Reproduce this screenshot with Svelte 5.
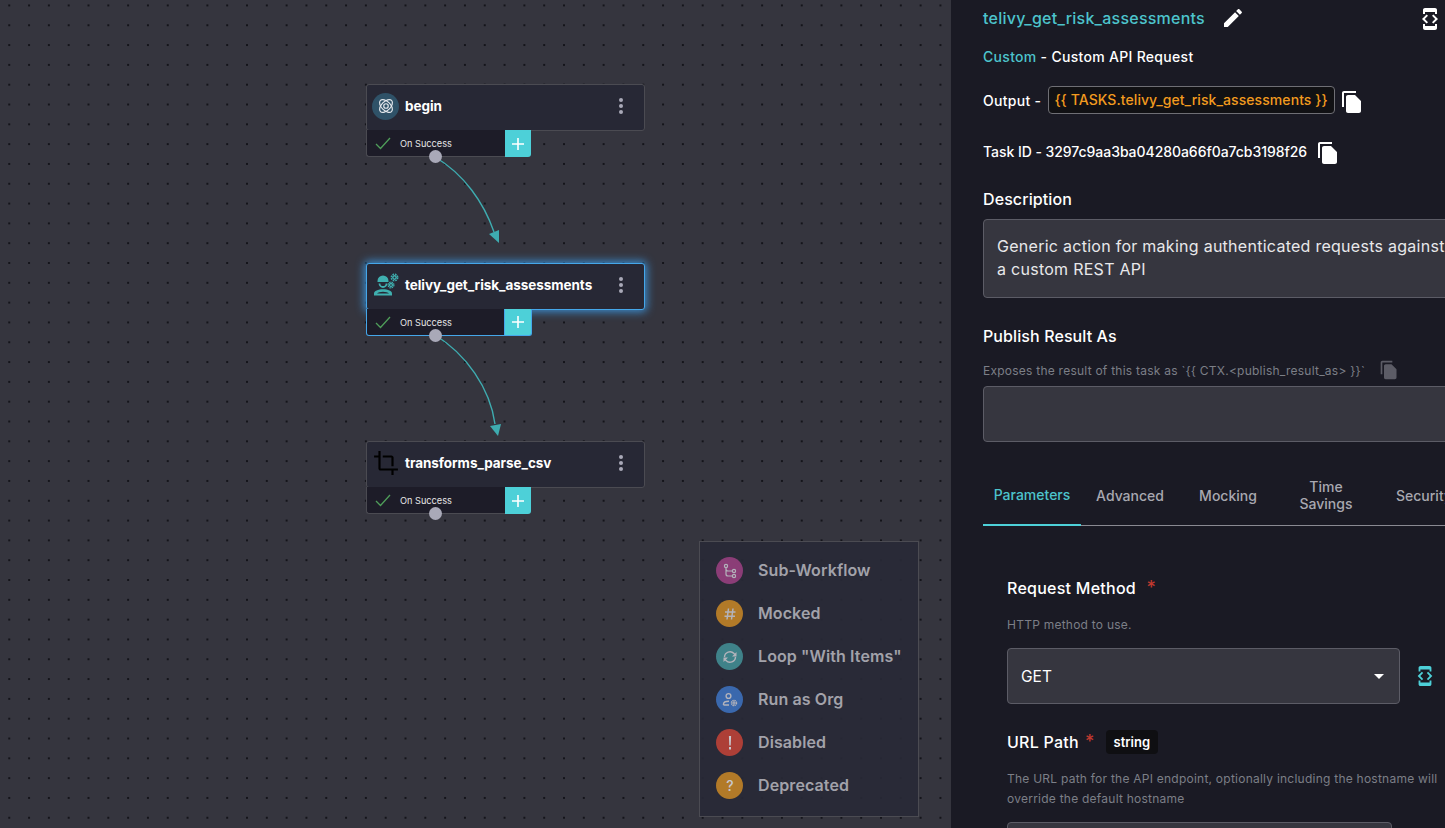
<script>
	const nodes = [
		{ name: 'begin', top: 84, icon: 'atom' },
		{ name: 'telivy_get_risk_assessments', top: 263, icon: 'worker', selected: true },
		{ name: 'transforms_parse_csv', top: 441, icon: 'crop' }
	]

	const legend = [
		{ label: 'Sub-Workflow', color: '#8b3d77', icon: 'branch' },
		{ label: 'Mocked', color: '#b27a28', icon: 'hash' },
		{ label: 'Loop "With Items"', color: '#3f8289', icon: 'loop' },
		{ label: 'Run as Org', color: '#3a68ad', icon: 'org' },
		{ label: 'Disabled', color: '#ad3f37', icon: 'bang' },
		{ label: 'Deprecated', color: '#b27a28', icon: 'question' }
	]

	const tabs = ['Parameters', 'Advanced', 'Mocking', 'Time Savings', 'Security']

	const copyPath = 'M16 1H4c-1.1 0-2 .9-2 2v14h2V3h12V1zm-1 4l6 6v10c0 1.1-.9 2-2 2H7.99C6.89 23 6 22.1 6 21l.01-14c0-1.1.89-2 1.99-2h7z'
	const codePath = 'M7 5h10v2h2V3c0-1.1-.9-1.99-2-1.99L7 1c-1.1 0-2 .9-2 2v4h2V5zm8.41 11.59L20 12l-4.59-4.59L14 8.83 17.17 12 14 15.17l1.41 1.42zM10 15.17L6.83 12 10 8.83 8.59 7.41 4 12l4.59 4.59L10 15.17zM17 19H7v-2H5v4c0 1.1.9 2 2 2h10c1.1 0 2-.9 2-2v-4h-2v2z'
</script>

<div class="app">
	<div class="canvas">
		<svg class="edges" width="951" height="828" aria-hidden="true">
			<path d="M435 157 C464 174 484 203 494 232" />
			<polygon points="499,243 489,234 499,230" />
			<path d="M435 335 C466 354 490 388 495 424" />
			<polygon points="498,436 490,426 501,424" />
		</svg>

		{#each nodes as node}
			<div class="node" class:selected={node.selected} style="top: {node.top}px">
				<div class="node-head">
					<span class="node-icon">
						{#if node.icon === 'atom'}
							<span class="atom-bg">
								<svg width="18" height="18" viewBox="0 0 24 24" fill="none" stroke="#e4e8ec" stroke-width="1.6">
									<ellipse cx="12" cy="12" rx="10.5" ry="6" transform="rotate(45 12 12)" />
									<ellipse cx="12" cy="12" rx="10.5" ry="6" transform="rotate(-45 12 12)" />
									<circle cx="12" cy="12" r="3" />
								</svg>
							</span>
						{:else if node.icon === 'worker'}
							<svg width="26" height="24" viewBox="0 0 26 24" fill="#3fb0b0">
								<path d="M4.500 8a5.500 5.500 0 0 1 11 0v1h-11z" />
								<path d="M6.500 10.500a3.500 3.500 0 0 0 7 0" fill="none" stroke="#3fb0b0" stroke-width="1.800" />
								<path d="M1 22.500v-2c0-2.500 4-4.200 9-4.200s9 1.700 9 4.200v2z" />
								<path d="M4 20.500c1-1 3.500-1.800 6-1.800s5 .8 6 1.800z" fill="#272835" />
								<circle cx="21.500" cy="4.500" r="1.700" fill="none" stroke="#3fb0b0" stroke-width="1.500" />
								<circle cx="21.500" cy="4.500" r="3.300" fill="none" stroke="#3fb0b0" stroke-width="1.300" stroke-dasharray="1.700 0.900" />
								<circle cx="18" cy="12" r="1.500" fill="none" stroke="#3fb0b0" stroke-width="1.300" />
								<circle cx="18" cy="12" r="2.900" fill="none" stroke="#3fb0b0" stroke-width="1.200" stroke-dasharray="1.500 0.800" />
							</svg>
						{:else}
							<svg width="26" height="26" viewBox="0 0 24 24" fill="#000">
								<path d="M17 15h2V7c0-1.100-.9-2-2-2H9v2h8v8zM7 17V1H5v4H1v2h4v10c0 1.100.9 2 2 2h10v4h2v-4h4v-2H7z" />
							</svg>
						{/if}
					</span>
					<span class="node-name">{node.name}</span>
					<span class="more"><i></i><i></i><i></i></span>
				</div>
				<div class="node-foot">
					<div class="branch">
						<svg width="16" height="13" viewBox="0 0 16 13" fill="none" stroke="#4f9e5a" stroke-width="1.300"><path d="M1 7l4.500 4.500L15 1" /></svg>
						<span>On Success</span>
					</div>
					<div class="plus">
						<svg width="12" height="12" viewBox="0 0 12 12" stroke="#fff" stroke-width="1.600"><path d="M6 0v12M0 6h12" /></svg>
					</div>
					<span class="handle"></span>
				</div>
			</div>
		{/each}

		<div class="legend">
			{#each legend as item}
				<div class="legend-row">
					<span class="legend-dot" style="background: {item.color}">
						<svg width="16" height="16" viewBox="0 0 16 16" fill="none" stroke="#b3b3bb" stroke-width="1.200">
							{#if item.icon === 'branch'}
								<circle cx="4" cy="3" r="1.600" /><circle cx="12" cy="8" r="1.600" /><circle cx="12" cy="13" r="1.600" />
								<path d="M4 4.600V11c0 1.300.8 2 2 2h4.400M4 6c0 1.300.8 2 2 2h4.400" />
							{:else if item.icon === 'hash'}
								<path stroke-width="1.500" d="M6.500 2.500L5 13.500M11 2.500L9.500 13.500M3 6h10.500M2.500 10.200h10.500" />
							{:else if item.icon === 'loop'}
								<path stroke-width="1.400" d="M2.500 8a5.500 5.500 0 0 1 9.500-3.500L13.500 6M13.500 8A5.500 5.500 0 0 1 4 11.500L2.500 10" />
								<path fill="#b3b3bb" stroke="none" d="M14.500 3v4.500H10zM1.500 13V8.500H6z" />
							{:else if item.icon === 'org'}
								<circle cx="6.500" cy="4" r="2.400" stroke-width="1.400" />
								<path stroke-width="1.400" d="M1.500 13v-1c0-1.800 2.500-2.700 5.500-2.700M1.500 13h5.500" />
								<circle cx="12" cy="11" r="1.100" stroke-width="1.100" />
								<circle cx="12" cy="11" r="2.600" stroke-width="1.300" stroke-dasharray="1.400 0.650" />
							{:else if item.icon === 'bang'}
								<path fill="#c8c8ce" stroke="none" d="M6.900 1h2.200l-.4 9.500H7.300zM7 12h2v2.500H7z" />
							{:else}
								<text x="8" y="13" text-anchor="middle" class="q">?</text>
							{/if}
						</svg>
					</span>
					<span class="legend-label">{item.label}</span>
				</div>
			{/each}
		</div>
	</div>

	<aside class="panel">
		<div class="panel-inner">
			<div class="title-row">
				<span class="title">telivy_get_risk_assessments</span>
				<svg class="pencil" width="24" height="24" viewBox="0 0 24 24" fill="#fff"><path d="M3 17.250V21h3.750L17.810 9.940l-3.750-3.750L3 17.250zM20.710 7.040c.39-.39.39-1.020 0-1.410l-2.340-2.340c-.39-.39-1.020-.39-1.410 0l-1.830 1.830 3.750 3.750 1.830-1.830z" /></svg>
				<svg class="code-top" width="24" height="24" viewBox="0 0 24 24" fill="#fff"><path d={codePath} /></svg>
			</div>

			<div class="sub-row"><span class="teal">Custom</span> - Custom API Request</div>

			<div class="output-row">
				<span class="output-label">Output -</span>
				<span class="chip">{'{{'} TASKS.telivy_get_risk_assessments {'}}'}</span>
				<svg class="copy" width="24" height="24" viewBox="0 0 24 24" fill="#fff"><path d={copyPath} /></svg>
			</div>

			<div class="task-row">
				<span>Task ID - 3297c9aa3ba04280a66f0a7cb3198f26</span>
				<svg class="copy" width="24" height="24" viewBox="0 0 24 24" fill="#fff"><path d={copyPath} /></svg>
			</div>

			<h3 class="heading">Description</h3>
			<div class="textbox desc">Generic action for making authenticated requests against<br />a custom REST API</div>

			<h3 class="heading publish">Publish Result As</h3>
			<div class="hint-row">
				<span class="hint">Exposes the result of this task as `{'{{'} CTX.&lt;publish_result_as&gt; {'}}'}`</span>
				<svg width="20" height="20" viewBox="0 0 24 24" fill="#5c5c66"><path d={copyPath} /></svg>
			</div>
			<div class="textbox result"></div>

			<div class="tabs">
				{#each tabs as tab, i}
					<div class="tab" class:active={i === 0}>{tab}</div>
				{/each}
			</div>

			<div class="params">
				<div class="label method-label">Request Method <span class="star">*</span></div>
				<div class="hint method-hint">HTTP method to use.</div>
				<div class="select-row">
					<div class="select">
						<span>GET</span>
						<span class="caret"></span>
					</div>
					<svg width="22" height="22" viewBox="0 0 24 24" fill="#4dd0d8"><path d={codePath} /></svg>
				</div>

				<div class="label url-label">
					URL Path <span class="star">*</span>
					<span class="type">string</span>
				</div>
				<div class="hint url-hint">The URL path for the API endpoint, optionally including the hostname will<br />override the default hostname</div>
				<div class="url-input"></div>
			</div>
		</div>
	</aside>
</div>

<style>
	:global(body) {
		margin: 0;
		overflow: hidden;
		background: #1a1a24;
	}

	.app {
		display: flex;
		width: 1445px;
		height: 828px;
		overflow: hidden;
		font-family: Inter, 'Noto Sans', sans-serif;
		color: #fff;
	}

	/* graph side */
	.canvas {
		position: relative;
		flex: 0 0 951px;
		background-color: #35353e;
		background-image: radial-gradient(circle at center, #14141a 0.7px, transparent 1px);
		background-size: 19.82px 19.82px;
		background-position: -0.67px -4.47px;
	}

	.edges {
		position: absolute;
		top: 0;
		left: 0;
	}

	.edges path {
		fill: none;
		stroke: #3eacb0;
		stroke-width: 1.400;
	}

	.edges polygon {
		fill: #3eacb0;
	}

	.node {
		position: absolute;
		left: 366px;
		width: 279px;
	}

	.node-head {
		display: flex;
		align-items: center;
		box-sizing: border-box;
		height: 47px;
		padding: 0 21px 3px 5px;
		background: #272835;
		border: 1px solid #4b4b52;
		border-radius: 3px;
	}

	.node-icon {
		display: flex;
		justify-content: center;
		flex: 0 0 27px;
		margin-right: 6px;
	}

	.atom-bg {
		display: flex;
		align-items: center;
		justify-content: center;
		width: 27px;
		height: 27px;
		border-radius: 50%;
		background: #2f5268;
	}

	.node-name {
		flex: 1;
		font-size: 13.500px;
		font-weight: 700;
		letter-spacing: -0.05px;
	}

	.more {
		display: flex;
		flex-direction: column;
		gap: 2.200px;
	}

	.more i {
		width: 4.200px;
		height: 4.200px;
		border-radius: 50%;
		background: #a9a9b8;
	}

	.node-foot {
		position: relative;
		display: flex;
		height: 27px;
		width: 165px;
		margin-top: -1px;
	}

	.branch {
		display: flex;
		align-items: center;
		box-sizing: border-box;
		width: 139px;
		padding-left: 8px;
		background: #1d1c28;
		border: 1px solid #4b4b52;
		border-top: none;
		border-right: none;
		border-radius: 0 0 0 3px;
		font-size: 9.200px;
		color: #e6e6e6;
	}

	.branch span {
		margin-left: 9px;
	}

	.plus {
		display: flex;
		align-items: center;
		justify-content: center;
		flex: 1;
		background: #4dd0d8;
		border-radius: 0 0 3px 0;
	}

	.handle {
		position: absolute;
		left: 63px;
		bottom: -6px;
		width: 13px;
		height: 13px;
		border-radius: 50%;
		background: #a9a9b8;
	}

	.selected .node-head {
		border-color: #45a7ea;
		box-shadow: 0 0 9px 2px rgba(60, 160, 240, 0.8);
	}

	.selected .branch {
		border-color: #45a7ea;
		border-right: 1px solid #45a7ea;
	}

	.selected .node-foot {
		width: 166px;
	}

	.selected .plus {
		border-bottom: 1px solid #45a7ea;
		border-right: 1px solid #45a7ea;
	}

	.q {
		fill: #c8c8ce;
		stroke: none;
		font-size: 14px;
		font-weight: 500;
		font-family: Inter, sans-serif;
	}

	.legend {
		position: absolute;
		left: 699px;
		top: 541px;
		box-sizing: border-box;
		width: 220px;
		height: 276px;
		padding: 15px 0 0 16px;
		background: rgba(40, 41, 54, 0.92);
		border: 1px solid #4b4b52;
	}

	.legend-row {
		display: flex;
		align-items: center;
		height: 27px;
		margin-bottom: 16px;
	}

	.legend-dot {
		display: flex;
		align-items: center;
		justify-content: center;
		width: 27px;
		height: 27px;
		margin-right: 15px;
		border-radius: 50%;
	}

	.legend-label {
		margin-top: -2px;
		font-size: 16px;
		font-weight: 600;
		letter-spacing: 0.1px;
		color: #a2a2aa;
		white-space: nowrap;
	}

	/* task panel */
	.panel {
		flex: 1;
		min-width: 0;
		overflow: hidden;
		background: #1a1a24;
	}

	.panel-inner {
		box-sizing: border-box;
		width: 540px;
		padding-left: 32px;
		font-size: 14px;
		font-weight: 500;
	}

	.title-row {
		position: relative;
		display: flex;
		align-items: center;
		height: 36px;
	}

	.title {
		font-size: 16px;
		letter-spacing: 0.24px;
		color: #4dc4cc;
	}

	.pencil {
		margin-left: 16px;
	}

	.code-top {
		position: absolute;
		left: 435px;
		top: 7px;
	}

	.teal {
		color: #4dc4cc;
	}

	.sub-row {
		margin-top: 11px;
		line-height: 20px;
		letter-spacing: 0.3px;
	}

	.output-row {
		display: flex;
		align-items: center;
		margin-top: 19px;
		height: 28px;
	}

	.output-label {
		margin-top: 1px;
		letter-spacing: 0.3px;
	}

	.copy {
		margin-top: 3px;
	}

	.chip {
		box-sizing: border-box;
		flex: 0 0 287px;
		height: 28px;
		margin: 0 5px 0 7px;
		padding-left: 5px;
		line-height: 26px;
		color: #f29b1f;
		background: #111114;
		border: 1px solid #6f6f75;
		border-radius: 4px;
		letter-spacing: 0.08px;
		white-space: nowrap;
	}

	.task-row {
		display: flex;
		align-items: center;
		gap: 9px;
		margin-top: 23px;
		height: 28px;
		letter-spacing: -0.05px;
	}

	.heading {
		margin: 24px 0 0;
		font-size: 16px;
		line-height: 20px;
		font-weight: 500;
		letter-spacing: 0.1px;
	}

	.textbox {
		box-sizing: border-box;
		background: #36363f;
		border: 1px solid #5c5c66;
		border-radius: 4px;
	}

	.desc {
		height: 79px;
		margin-top: 10px;
		padding: 15px 0 0 13px;
		font-size: 16px;
		font-weight: 400;
		letter-spacing: 0.27px;
		line-height: 23px;
		color: #e8e8ea;
		white-space: nowrap;
	}

	.publish {
		margin-top: 28px;
	}

	.hint {
		font-size: 12px;
		font-weight: 400;
		letter-spacing: 0.24px;
		color: #7c7f87;
	}

	.hint-row {
		display: flex;
		align-items: center;
		gap: 14px;
		height: 20px;
		margin-top: 14px;
	}

	.result {
		height: 56px;
		margin-top: 6px;
	}

	.tabs {
		display: flex;
		height: 84px;
		align-items: flex-end;
		box-sizing: border-box;
		border-bottom: 1px solid #8a8a92;
	}

	.tab {
		display: flex;
		align-items: center;
		justify-content: center;
		box-sizing: border-box;
		flex: 0 0 98px;
		height: 60px;
		margin-bottom: -1px;
		padding: 0 8px 2px;
		text-align: center;
		font-size: 14px;
		line-height: 17px;
		color: #a8a8b0;
	}

	.tab.active {
		color: #4dc4cc;
		border-bottom: 2px solid #4dd0d8;
	}

	.params {
		padding-left: 24px;
	}

	.label {
		font-size: 16px;
		line-height: 20px;
		font-weight: 500;
		letter-spacing: 0.25px;
	}

	.star {
		margin-left: 6px;
		font-size: 18px;
		color: #c0392f;
	}

	.method-label {
		margin-top: 52px;
	}

	.method-hint {
		margin-top: 17px;
		line-height: 20px;
	}

	.select-row {
		display: flex;
		align-items: center;
		gap: 14px;
		margin-top: 13px;
	}

	.select {
		display: flex;
		align-items: center;
		justify-content: space-between;
		box-sizing: border-box;
		width: 393px;
		height: 56px;
		padding: 0 15px 0 13px;
		background: #36363f;
		border: 1px solid #5c5c66;
		border-radius: 4px;
		font-size: 15.500px;
		font-weight: 400;
	}

	.caret {
		border-left: 5px solid transparent;
		border-right: 5px solid transparent;
		border-top: 5px solid #fff;
	}

	.url-label {
		display: flex;
		align-items: center;
		gap: 6px;
		margin-top: 26px;
		height: 24px;
	}

	.url-label .star {
		margin-left: 0;
	}

	.type {
		margin-left: 5px;
		padding: 0 8px;
		line-height: 24px;
		font-size: 13px;
		font-weight: 600;
		letter-spacing: 0;
		background: #0f0f12;
		border-radius: 4px;
	}

	.url-hint {
		margin-top: 15px;
		line-height: 20px;
		white-space: nowrap;
	}

	.url-input {
		box-sizing: border-box;
		width: 385px;
		height: 60px;
		margin-top: 13px;
		background: #36363f;
		border: 1px solid #5c5c66;
		border-radius: 4px;
	}
</style>
